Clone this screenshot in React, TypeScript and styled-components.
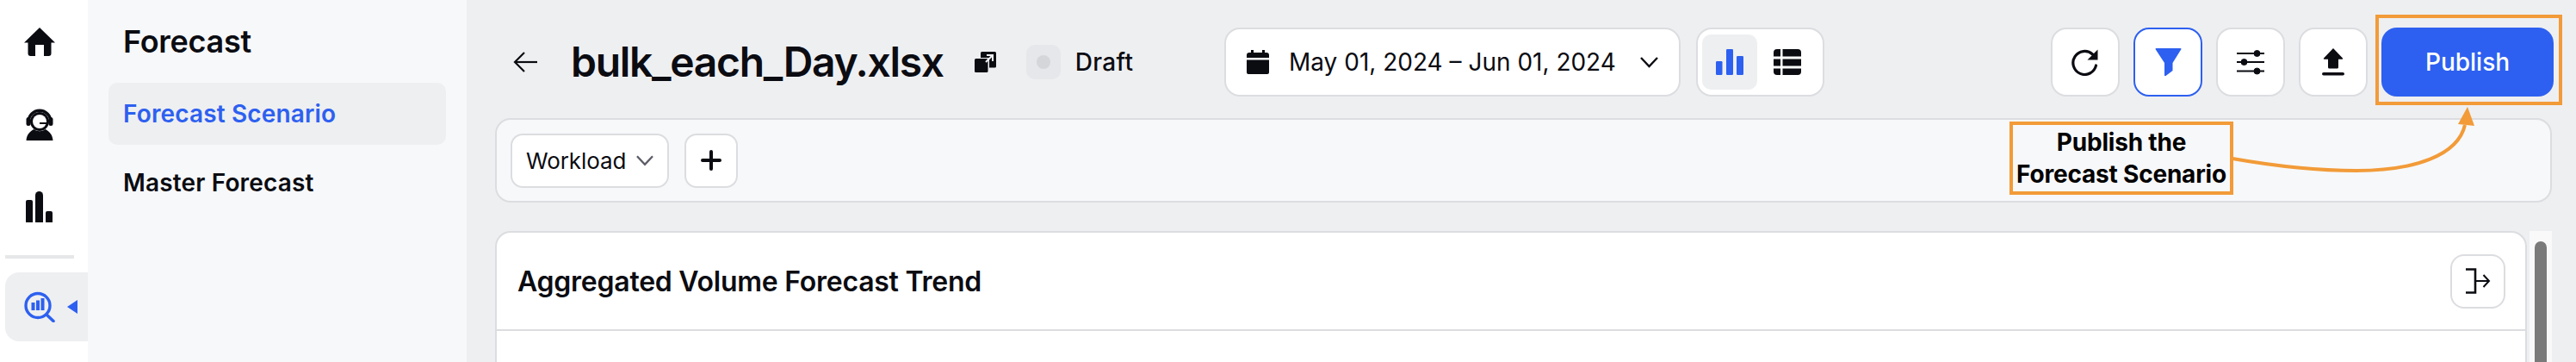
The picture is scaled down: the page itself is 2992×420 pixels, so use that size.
import React from "react";
import styled, { createGlobalStyle } from "styled-components";

const INK = "#0b0c12";
const BLUE = "#2d60f0";
const ORANGE = "#f29b38";
const LINE = "#dcdde0";

const GlobalStyle = createGlobalStyle`
  html, body {
    margin: 0;
    padding: 0;
    height: 420px;
    overflow: hidden;
    background: #eeeff1;
  }
  * {
    box-sizing: border-box;
  }
`;

const HomeIcon = () => (
  <svg width="36" height="33" viewBox="0 0 36 33" fill={INK}>
    <path d="M18 0 L36 17.5 H31.500 V30 a3 3 0 0 1 -3 3 H23 V20 H13 V33 H7.500 a3 3 0 0 1 -3 -3 V17.500 H0 Z" />
  </svg>
);

const AgentIcon = () => (
  <svg width="32" height="37" viewBox="0 0 32 37" fill="none">
    <path d="M1.500 15 A14.500 14.500 0 0 1 30.500 15 Z" fill={INK} />
    <path d="M5.500 13 A10.800 10.800 0 0 1 26.500 13" stroke="#fff" strokeWidth="1.500" />
    <circle cx="16" cy="15" r="11" fill={INK} />
    <circle cx="16" cy="15" r="8" fill="#fff" />
    <rect x="0.500" y="10" width="5" height="10" rx="2.500" fill={INK} />
    <rect x="26.500" y="10" width="5" height="10" rx="2.500" fill={INK} />
    <path d="M16 17 H25" stroke={INK} strokeWidth="2" />
    <path d="M0.500 37 C1 30 5 26 9.500 24 C13 27 19 27 22.500 24 C27 26 31 30 31.500 37 Z" fill={INK} />
  </svg>
);

const BarsIcon = () => (
  <svg width="32" height="36" viewBox="0 0 32 36" fill={INK}>
    <path d="M0 12 a2 2 0 0 1 2 -2 h4 a2 2 0 0 1 2 2 V36 H0 Z" />
    <path d="M11 4.500 a4.500 4.500 0 0 1 9 0 V36 H11 Z" />
    <path d="M23 25 a2 2 0 0 1 2 -2 h4 a2 2 0 0 1 2 2 V36 H23 Z" />
  </svg>
);

const ChartIcon = () => (
  <svg width="32" height="30" viewBox="0 0 32 30" fill={BLUE}>
    <rect x="0" y="14" width="7.500" height="16" rx="1.200" />
    <rect x="12" y="0" width="8" height="30" rx="1.200" />
    <rect x="24" y="8" width="8" height="22" rx="1.200" />
  </svg>
);

const SearchChartIcon = () => (
  <svg width="36" height="36" viewBox="0 0 36 36" fill="none">
    <circle cx="16" cy="16.500" r="14" stroke={BLUE} strokeWidth="3.400" />
    <path d="M26 27 L34 34.500" stroke={BLUE} strokeWidth="3.600" strokeLinecap="round" />
    <rect x="8.500" y="13" width="4" height="9" fill={BLUE} />
    <rect x="14" y="10.500" width="4" height="11.500" fill={BLUE} />
    <rect x="19.500" y="8" width="4" height="14" fill={BLUE} />
  </svg>
);

const BackIcon = () => (
  <svg width="28" height="24" viewBox="0 0 28 24" fill="none" stroke={INK} strokeWidth="2.200">
    <path d="M13 1 L2 12 L13 23" />
    <path d="M2 12 H28" />
  </svg>
);

const CopyIcon = () => (
  <svg width="25" height="24" viewBox="0 0 25 24">
    <path d="M7 1.500 a1.500 1.500 0 0 1 1.500 -1.500 H23.500 a1.500 1.500 0 0 1 1.500 1.500 V17 a1.500 1.500 0 0 1 -1.500 1.500 H17 V8.500 a1.500 1.500 0 0 0 -1.500 -1.500 H7 Z" fill={INK} />
    <rect x="0" y="8" width="15.500" height="16" rx="1.500" fill={INK} />
    <path d="M13 12 L20.500 4.500 M14 4 H21 V11" fill="none" stroke="#eeeff1" strokeWidth="2" />
  </svg>
);

const Chevron = ({ width, color }: { width: number; color: string }) => (
  <svg width={width} height="13" viewBox="0 0 21 13" fill="none" stroke={color} strokeWidth="2.400">
    <path d="M1 1 L10.500 11 L20 1" />
  </svg>
);

const CalendarIcon = () => (
  <svg width="26" height="28" viewBox="0 0 26 28" fill={INK}>
    <rect x="5" y="0" width="3" height="5" />
    <rect x="18" y="0" width="3" height="5" />
    <path d="M0 6 a3 3 0 0 1 3 -3 H23 a3 3 0 0 1 3 3 V9 H0 Z" />
    <path d="M0 11.500 H26 V26 a2 2 0 0 1 -2 2 H2 a2 2 0 0 1 -2 -2 Z" />
  </svg>
);

const TableIcon = () => (
  <svg width="32" height="30" viewBox="0 0 32 30" fill={INK}>
    <path d="M0 4 a4 4 0 0 1 4 -4 H8 V8.500 H0 Z" />
    <path d="M10.500 0 H28 a4 4 0 0 1 4 4 V8.500 H10.500 Z" />
    <rect x="0" y="11.500" width="8" height="8" />
    <rect x="10.500" y="11.500" width="21.500" height="8" />
    <path d="M0 22.500 H8 V30 H4 a4 4 0 0 1 -4 -4 Z" />
    <path d="M10.500 22.500 H32 V26 a4 4 0 0 1 -4 4 H10.500 Z" />
  </svg>
);

const RefreshIcon = () => (
  <svg width="32" height="32" viewBox="0 0 32 32" fill="none">
    <path d="M24.500 7 A13.500 13.500 0 1 0 28.500 20" stroke={INK} strokeWidth="3.200" strokeLinecap="round" />
    <path d="M30.500 1.500 V13.500 H18.500 Z" fill={INK} />
  </svg>
);

const FilterIcon = () => (
  <svg width="31" height="32" viewBox="0 0 31 32" fill={BLUE}>
    <path d="M0.500 1 a1 1 0 0 1 1 -1 H29.500 a1 1 0 0 1 1 1 L20.500 17 V26 L12.500 32 H11 V17 Z" />
  </svg>
);

const SlidersIcon = () => (
  <svg width="32" height="30" viewBox="0 0 32 30" fill={INK} stroke={INK}>
    <path d="M0 5 H32 M0 15 H32 M0 25.500 H32" strokeWidth="2.200" />
    <circle cx="23.500" cy="5" r="3.500" />
    <circle cx="8.500" cy="15" r="3.500" />
    <circle cx="23.500" cy="25.500" r="3.500" />
  </svg>
);

const UploadIcon = () => (
  <svg width="26" height="32" viewBox="0 0 26 32" fill={INK}>
    <path d="M13 0 L24 11.500 a0.800 0.800 0 0 1 -0.500 1.300 H19 V22 a1.500 1.500 0 0 1 -1.500 1.500 H8.500 A1.500 1.500 0 0 1 7 22 V12.800 H2.500 A0.800 0.800 0 0 1 2 11.500 Z" />
    <rect x="0" y="28" width="26" height="3.600" rx="1.800" />
  </svg>
);

const PlusIcon = () => (
  <svg width="24" height="24" viewBox="0 0 24 24" fill="none" stroke={INK} strokeWidth="4" strokeLinecap="round">
    <path d="M12 2 V22 M2 12 H22" />
  </svg>
);

const ExpandIcon = () => (
  <svg width="30" height="30" viewBox="0 0 30 30" fill="none" stroke={INK}>
    <path d="M1 1.500 H12 V28.500 H1" strokeWidth="2.600" />
    <path d="M12 15 H28" strokeWidth="2" />
    <path d="M21.500 8 L28 15 L21.500 22" strokeWidth="2" />
  </svg>
);

const Page = styled.div`
  display: flex;
  width: 2992px;
  height: 420px;
  overflow: hidden;
  font-family: Inter, "Liberation Sans", sans-serif;
  color: ${INK};
`;

const Rail = styled.nav`
  flex: none;
  width: 102px;
  background: #fff;
  display: flex;
  flex-direction: column;
  padding-top: 32px;
`;

const RailIcon = styled.div<{ $height: number; $gap: number }>`
  display: flex;
  justify-content: center;
  width: 92px;
  height: ${(p) => p.$height}px;
  margin-bottom: ${(p) => p.$gap}px;
`;

const RailDivider = styled.div`
  width: 80px;
  height: 4px;
  margin: 0 0 16px 6px;
  background: #e6e7e9;
`;

const RailActive = styled.div`
  display: flex;
  align-items: center;
  margin-left: 6px;
  height: 80px;
  padding-left: 22px;
  gap: 14px;
  background: #eeeff1;
  border-radius: 16px 0 0 16px;
`;

const Caret = styled.span`
  width: 0;
  height: 0;
  border-top: 8px solid transparent;
  border-bottom: 8px solid transparent;
  border-right: 12px solid ${BLUE};
`;

const SubNav = styled.aside`
  flex: none;
  width: 440px;
  background: #f7f8fa;
  padding: 29px 24px 0;
`;

const SubNavTitle = styled.h2`
  margin: 0 0 28px 17px;
  font-size: 36px;
  line-height: 39px;
  font-weight: 600;
  letter-spacing: -0.3px;
`;

const NavItem = styled.div<{ $active?: boolean }>`
  display: flex;
  align-items: center;
  height: 72px;
  padding-left: 17px;
  margin-bottom: 8px;
  border-radius: 10px;
  font-size: 28px;
  font-weight: 600;
  letter-spacing: 0.15px;
  color: ${(p) => (p.$active ? BLUE : INK)};
  background: ${(p) => (p.$active ? "#eeeff1" : "transparent")};
`;

const Main = styled.main`
  position: relative;
  flex: 1;
  min-width: 0;
  padding: 32px 28px 0 33px;
  display: flex;
  flex-direction: column;
`;

const Header = styled.header`
  display: flex;
  align-items: center;
  height: 80px;
  margin: 0 -2px 25px 0;
`;

const TitleGroup = styled.div`
  display: flex;
  align-items: center;
  width: 847px;
  padding-left: 21px;
`;

const Title = styled.h1`
  margin: 0 36px 0 39px;
  font-size: 48px;
  line-height: 56px;
  font-weight: 600;
  letter-spacing: -1.3px;
  white-space: nowrap;
`;

const StatusChip = styled.span`
  display: flex;
  align-items: center;
  justify-content: center;
  width: 40px;
  height: 40px;
  margin: 0 17px 0 35px;
  border-radius: 10px;
  background: #e6e7ea;
`;

const StatusDot = styled.span`
  width: 16px;
  height: 16px;
  border-radius: 50%;
  background: #d5d6da;
`;

const StatusText = styled.span`
  font-size: 28px;
  font-weight: 500;
  letter-spacing: 0.3px;
`;

const WhiteBox = styled.div`
  display: flex;
  align-items: center;
  height: 80px;
  background: #fff;
  border: 2px solid ${LINE};
  border-radius: 18px;
`;

const DatePicker = styled(WhiteBox)`
  width: 530px;
  padding: 0 24px 0 24px;
  font-size: 28px;
  white-space: nowrap;
  justify-content: space-between;
`;

const DateText = styled.span`
  flex: 1;
  margin-left: 23px;
`;

const ViewToggle = styled(WhiteBox)`
  width: 149px;
  margin-left: 18px;
  padding: 0 5px;
`;

const ViewOption = styled.div<{ $active?: boolean }>`
  display: flex;
  align-items: center;
  justify-content: center;
  width: 66px;
  height: 64px;
  border-radius: 10px;
  margin-right: 4px;
  background: ${(p) => (p.$active ? "#eeeff1" : "transparent")};
`;

const Actions = styled.div`
  display: flex;
  gap: 16px;
  margin-left: auto;
`;

const IconButton = styled(WhiteBox)<{ $active?: boolean }>`
  justify-content: center;
  width: 80px;
  border-color: ${(p) => (p.$active ? BLUE : LINE)};
`;

const PublishButton = styled.div`
  position: relative;
  display: flex;
  align-items: center;
  justify-content: center;
  width: 200px;
  height: 80px;
  border-radius: 18px;
  background: ${BLUE};
  color: #fff;
  font-size: 28px;
  font-weight: 500;
`;

const PublishFrame = styled.span`
  position: absolute;
  top: -15px;
  left: -7px;
  width: 217px;
  height: 105px;
  border: 4px solid ${ORANGE};
`;

const Toolbar = styled.div`
  display: flex;
  align-items: center;
  gap: 18px;
  height: 98px;
  margin-bottom: 33px;
  padding-left: 16px;
  background: #f7f8fa;
  border: 2px solid ${LINE};
  border-radius: 18px;
`;

const SelectBox = styled(WhiteBox)`
  width: 184px;
  height: 63px;
  padding: 0 16px;
  border-radius: 14px;
  font-size: 26px;
  letter-spacing: -0.1px;
  justify-content: space-between;
`;

const AddButton = styled(WhiteBox)`
  width: 62px;
  height: 63px;
  justify-content: center;
  border-radius: 14px;
`;

const ContentRow = styled.div`
  flex: 1;
  display: flex;
  gap: 3px;
  min-height: 0;
`;

const Card = styled.section`
  flex: 1;
  height: 220px;
  background: #fff;
  border: 2px solid ${LINE};
  border-bottom: none;
  border-radius: 18px 18px 0 0;
`;

const CardHeader = styled.div`
  display: flex;
  align-items: center;
  justify-content: space-between;
  height: 114px;
  padding: 0 23px 0 24px;
  border-bottom: 2px solid ${LINE};
`;

const CardTitle = styled.h3`
  margin: 0;
  font-size: 32px;
  font-weight: 600;
  letter-spacing: -0.25px;
`;

const ExpandButton = styled(WhiteBox)`
  width: 64px;
  height: 63px;
  justify-content: center;
  border-radius: 16px;
`;

const ScrollTrack = styled.div`
  flex: none;
  width: 26px;
  background: #f9f9f9;
  padding: 12px 6px 0;
`;

const ScrollThumb = styled.div`
  width: 14px;
  height: 200px;
  border-radius: 7px;
  background: #7a7a7a;
`;

const Callout = styled.div`
  position: absolute;
  left: 1792px;
  top: 141px;
  width: 260px;
  height: 85px;
  display: flex;
  align-items: center;
  justify-content: center;
  border: 4px solid ${ORANGE};
  font-size: 28px;
  line-height: 37px;
  font-weight: 700;
  letter-spacing: -0.2px;
  text-align: center;
  color: #000;
  white-space: nowrap;
`;

const CalloutArrow = styled.svg`
  position: absolute;
  left: 2048px;
  top: 120px;
`;

export default function App() {
  return (
    <Page>
      <GlobalStyle />
      <Rail>
        <RailIcon $height={33} $gap={61}><HomeIcon /></RailIcon>
        <RailIcon $height={37} $gap={59}><AgentIcon /></RailIcon>
        <RailIcon $height={36} $gap={38}><BarsIcon /></RailIcon>
        <RailDivider />
        <RailActive>
          <SearchChartIcon />
          <Caret />
        </RailActive>
      </Rail>
      <SubNav>
        <SubNavTitle>Forecast</SubNavTitle>
        <NavItem $active>Forecast Scenario</NavItem>
        <NavItem>Master Forecast</NavItem>
      </SubNav>
      <Main>
        <Header>
          <TitleGroup>
            <BackIcon />
            <Title>bulk_each_Day.xlsx</Title>
            <CopyIcon />
            <StatusChip><StatusDot /></StatusChip>
            <StatusText>Draft</StatusText>
          </TitleGroup>
          <DatePicker>
            <CalendarIcon />
            <DateText>May 01, 2024 – Jun 01, 2024</DateText>
            <Chevron width={21} color={INK} />
          </DatePicker>
          <ViewToggle>
            <ViewOption $active><ChartIcon /></ViewOption>
            <ViewOption><TableIcon /></ViewOption>
          </ViewToggle>
          <Actions>
            <IconButton><RefreshIcon /></IconButton>
            <IconButton $active><FilterIcon /></IconButton>
            <IconButton><SlidersIcon /></IconButton>
            <IconButton><UploadIcon /></IconButton>
            <PublishButton>
              Publish
              <PublishFrame />
            </PublishButton>
          </Actions>
        </Header>
        <Toolbar>
          <SelectBox>
            Workload
            <Chevron width={20} color="#5b5c66" />
          </SelectBox>
          <AddButton><PlusIcon /></AddButton>
        </Toolbar>
        <ContentRow>
          <Card>
            <CardHeader>
              <CardTitle>Aggregated Volume Forecast Trend</CardTitle>
              <ExpandButton><ExpandIcon /></ExpandButton>
            </CardHeader>
          </Card>
          <ScrollTrack><ScrollThumb /></ScrollTrack>
        </ContentRow>
        <Callout>
          <span>Publish the<br />Forecast Scenario</span>
        </Callout>
        <CalloutArrow width="300" height="90" viewBox="0 0 300 90" fill="none">
          <path d="M3 64 C60 74 110 78 147 78 C215 78 265 60 273 25" stroke={ORANGE} strokeWidth="4" />
          <path d="M276 4 L265 24 L284 26 Z" fill={ORANGE} />
        </CalloutArrow>
      </Main>
    </Page>
  );
}
